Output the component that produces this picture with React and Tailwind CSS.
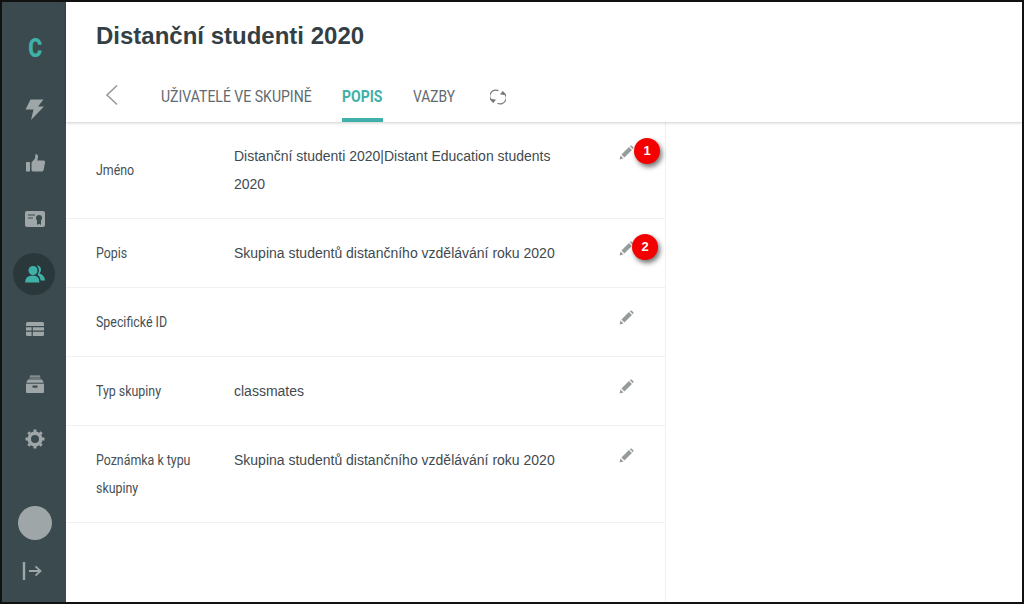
import React from "react";

const Pencil = () => (
  <svg width="15" height="15" viewBox="0 0 16 16" fill="#969b9c">
    <path d="M0.6 15.4 L1.6 11.2 L4.8 14.4 Z" />
    <path d="M2.6 10.2 L10.6 2.2 L13.8 5.4 L5.8 13.4 Z" />
    <path d="M11.6 1.2 L12.4 0.6 Q13 0.2 13.6 0.7 L15.3 2.4 Q15.8 3 15.3 3.6 L14.8 4.4 Z" />
  </svg>
);

const Badge = ({ n, cls }) => (
  <div className={`absolute w-[26px] h-[26px] rounded-full bg-[#f50000] text-white text-[13px] font-bold flex items-center justify-center shadow-[2px_3px_5px_rgba(0,0,0,0.55)] font-['Liberation_Sans',sans-serif] ${cls}`}>
    {n}
  </div>
);

const Row = ({ label, value, h, badge, pt = "pt-[20px]", pencilTop = "top-[22px]" }) => (
  <div className={`flex relative border-b border-[#f0f0f0] ${h} ${pt}`}>
    <div className="w-[168px] pl-[30px] shrink-0 leading-[28px] text-[14px] text-[#454f54] font-['Roboto',sans-serif]">
      <div className="origin-left scale-x-[0.885] w-[122px]">{label}</div>
    </div>
    <div className="w-[340px] text-[14px] leading-[28px] text-[#3f4a4f] font-['Liberation_Sans',sans-serif]">{value}</div>
    <div className={`absolute left-[553px] ${pencilTop}`}><Pencil /></div>
    {badge}
  </div>
);

const NavIcon = ({ children, active }) => (
  <div className={`w-[42px] h-[42px] rounded-full flex items-center justify-center pl-[2px] ${active ? "bg-[#2a383c]" : ""}`}>{children}</div>
);

const G = "#9ea6a8";

export default function App() {
  return (
    <div className="w-[1024px] h-[604px] border-2 border-[#111] overflow-hidden flex bg-white font-['Roboto',sans-serif]">
      <aside className="w-[64px] shrink-0 h-full bg-[#3a4a4e] flex flex-col items-center pt-[27px]">
        <div className="text-[#3fb1a8] text-[25px] font-black leading-[40px] h-[40px] mb-[19px] ml-[2px] scale-x-[0.85]">C</div>
        <div className="flex flex-col gap-[13px] items-center">
          <NavIcon>
            <svg width="19" height="21" viewBox="0 0 19 21" fill={G} className="-ml-[1px]"><path d="M5.5 0.5 H18.5 L13 7.5 H19 L6 21 L8.5 10.5 H0.5 Z" /></svg>
          </NavIcon>
          <NavIcon>
            <svg width="19" height="18" viewBox="0 0 19 18" fill={G} className="-mt-[3px]"><rect x="0" y="8" width="4" height="9.5" rx="0.6" /><path d="M5.5 8.5 L9 4.5 L9.5 0 Q12 0 12 3 L11.3 6.5 H17.5 Q19.3 6.5 19 8.7 L17.6 16 Q17.2 17.5 15.6 17.5 H7.5 Q5.5 17.5 5.5 16 Z" /></svg>
          </NavIcon>
          <NavIcon>
            <svg width="20" height="16" viewBox="0 0 20 16"><rect width="20" height="16" rx="2" fill={G} /><path d="M3 4 H10 M3 7 H8" stroke="#3a4a4e" strokeWidth="1.2" /><circle cx="14" cy="7" r="3" fill="#3a4a4e" /><path d="M12 9 V14 L14 12.8 L16 14 V9 Z" fill="#3a4a4e" /></svg>
          </NavIcon>
          <NavIcon active>
            <svg width="20" height="18" viewBox="0 0 20 18" fill="#3fb1a8" className="-mt-[1px]"><circle cx="8" cy="5.5" r="4.5" /><path d="M0 17.5 Q0 10.5 8 10.5 Q14.5 10.5 14.5 17.5 Z" /><path d="M11.5 0.2 A4.8 4.8 0 0 1 16 5 A4.8 4.8 0 0 1 14.5 8.4 Q19.6 9.8 20 15.5 H15.8 Q15 11.5 12.5 9.6 A6 6 0 0 0 14 5 Q14 2 11.5 0.2 Z" /></svg>
          </NavIcon>
          <NavIcon>
            <svg width="18" height="14" viewBox="0 0 18 14"><rect width="18" height="14" rx="1.5" fill={G} /><path d="M0 4.6 H18 M0 9.2 H18 M6.2 4.6 V14" stroke="#3a4a4e" strokeWidth="1.2" /></svg>
          </NavIcon>
          <NavIcon>
            <svg width="18" height="18" viewBox="0 0 18 18" fill={G}><path d="M0 8 L2 4.5 H16 L18 8 V17 Q18 18 17 18 H1 Q0 18 0 17 Z" /><path d="M3.5 3.5 L4 0.5 H14 L14.5 3.5 Z" /><path d="M3.5 2.2 H14.5" stroke="#3a4a4e" strokeWidth="0.8" /><rect x="6.5" y="10.5" width="5" height="2.2" fill="#3a4a4e" /><path d="M0 8.2 H18" stroke="#3a4a4e" strokeWidth="1" /></svg>
          </NavIcon>
          <NavIcon>
            <svg width="20" height="20" viewBox="0 0 20 20"><circle cx="10" cy="10" r="5.8" fill="none" stroke={G} strokeWidth="3.6" /><path d="M10 0.5 V3 M10 17 V19.5 M0.5 10 H3 M17 10 H19.5 M3.3 3.3 L5 5 M15 15 L16.7 16.7 M3.3 16.7 L5 15 M15 5 L16.7 3.3" stroke={G} strokeWidth="3" /></svg>
          </NavIcon>
        </div>
        <div className="mt-auto flex flex-col items-center pb-[22px]">
          <div className="w-[34px] h-[34px] rounded-full bg-[#9ea6a8] mb-[22px] ml-[2px]" />
          <svg width="20" height="18" viewBox="0 0 20 18" fill="none" stroke={G} strokeWidth="1.8" className="-ml-[5px]"><path d="M2 0 V18" strokeWidth="2.4" /><path d="M7 9 H18.5 M13.5 4.4 L18.5 9 L13.5 13.6" /></svg>
        </div>
      </aside>
      <main className="flex-1 min-w-0 flex flex-col">
        <header className="h-[120px] shrink-0 shadow-[0_1px_3px_rgba(0,0,0,0.2)] relative z-10 bg-white">
          <h1 className="pl-[30px] pt-[17px] h-[67px] text-[24px] leading-[34px] font-bold text-[#333f44] font-['Liberation_Sans',sans-serif]">Distanční studenti 2020</h1>
          <div className="flex items-start pl-[38px] h-[53px] text-[16px] text-[#5f6a6e]">
            <svg width="15" height="22" viewBox="0 0 15 22" fill="none" stroke="#999" strokeWidth="1.6" className="mt-[15px]"><path d="M13 1.5 L3 11 L13 20.5" /></svg>
            <div className="ml-[42px] pt-[16px] w-[181px] leading-[24px] whitespace-nowrap"><span className="inline-block origin-left scale-x-[0.877]">UŽIVATELÉ VE SKUPINĚ</span></div>
            <div className="relative h-[53px] w-[41px] pt-[16px] leading-[24px] font-bold text-[#3fb1a8] whitespace-nowrap">
              <span className="inline-block origin-left scale-x-[0.875]">POPIS</span>
              <div className="absolute left-0 right-0 bottom-0 h-[4px] bg-[#3fb1a8]" />
            </div>
            <div className="ml-[30px] pt-[16px] w-[43px] leading-[24px] whitespace-nowrap"><span className="inline-block origin-left scale-x-[0.86]">VAZBY</span></div>
            <svg width="16" height="16" viewBox="0 0 16 16" fill="none" stroke="#777" strokeWidth="1.2" className="ml-[34px] mt-[20px]">
              <path d="M8.5 1.8 A6 6 0 0 0 3 12.5" />
              <path d="M1 9.8 L3 14.2 L6 10.8 Z" fill="#777" stroke="none" />
              <path d="M7.5 14.2 A6 6 0 0 0 13 3.5" />
              <path d="M15 6.2 L13 1.8 L10 5.2 Z" fill="#777" stroke="none" />
            </svg>
          </div>
        </header>
        <div className="w-[600px] flex-1 border-r border-[#f0f0f0]">
          <Row h="h-[97px]" pt="pt-[20px]" pencilTop="top-[23px]" label={<div className="pt-[14px]">Jméno</div>} value={<>Distanční studenti 2020|Distant Education students<br />2020</>} badge={<Badge n="1" cls="left-[568px] top-[16px]" />} />
          <Row h="h-[69px]" label="Popis" value="Skupina studentů distančního vzdělávání roku 2020" badge={<Badge n="2" cls="left-[566px] top-[15px]" />} />
          <Row h="h-[69px]" label="Specifické ID" value="" />
          <Row h="h-[69px]" label="Typ skupiny" value="classmates" />
          <Row h="h-[97px]" label={<div className="w-[110px]">Poznámka k typu skupiny</div>} value="Skupina studentů distančního vzdělávání roku 2020" />
        </div>
      </main>
    </div>
  );
}
